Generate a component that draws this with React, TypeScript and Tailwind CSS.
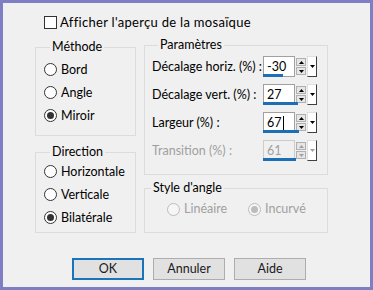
import React from 'react'

const font = { fontFamily: 'Lato, "Noto Sans", sans-serif' }

function Radio({ label, checked, disabled }: { label: string; checked?: boolean; disabled?: boolean }) {
  return (
    <div className="flex items-center h-[23px]">
      <span
        className={
          'w-[13px] h-[13px] rounded-full border flex items-center justify-center shrink-0 ' +
          (disabled ? 'border-[#bcbcbc] bg-[#f6f6f6]' : 'border-[#333333] bg-white')
        }
      >
        {checked && (
          <span className={'w-[7px] h-[7px] rounded-full ' + (disabled ? 'bg-[#bcbcbc]' : 'bg-[#333333]')} />
        )}
      </span>
      <span className={'ml-[4px] whitespace-nowrap ' + (disabled ? 'text-[#a0a0a0]' : 'text-black')}>{label}</span>
    </div>
  )
}

function Group({ title, className, children }: { title: string; className: string; children: React.ReactNode }) {
  return (
    <div className={'border border-[#dcdcdc] ' + className}>
      <div className="-mt-[9px] ml-[6px] px-[2px] w-fit bg-[#f0f0f0] leading-[16px] text-black whitespace-nowrap">{title}</div>
      {children}
    </div>
  )
}

function Spin({ value, bar, disabled, caret }: { value: string; bar: number; disabled?: boolean; caret?: boolean }) {
  const arrow = disabled ? '#a0a0a0' : '#000000'
  return (
    <div className="relative flex h-[21px]">
      <div
        className={
          'w-[32px] h-full border flex items-center pl-[3px] ' +
          (disabled ? 'border-[#cccccc] bg-[#f0f0f0] text-[#a0a0a0]' : 'border-[#a0a0a0] bg-white text-black')
        }
      >
        {value}
        {caret && <span className="w-px h-[14px] bg-black ml-[1px]" />}
      </div>
      <div className="w-[10px] h-full flex flex-col justify-center gap-[1px] ml-[1px]">
        <div className="h-[8px] bg-[#e6e6e6] border border-[#b0b0b0] flex items-center justify-center">
          <svg width="5" height="3" viewBox="0 0 5 3"><path d="M0 3 L2.5 0 L5 3 Z" fill={arrow} /></svg>
        </div>
        <div className="h-[8px] bg-[#e6e6e6] border border-[#b0b0b0] flex items-center justify-center">
          <svg width="5" height="3" viewBox="0 0 5 3"><path d="M0 0 L2.5 3 L5 0 Z" fill={arrow} /></svg>
        </div>
      </div>
      <div className="w-[10px] h-full ml-[1px] bg-white border border-[#e0e0e0] border-r-[#404040] border-b-[#404040] flex items-center justify-center">
        <svg width="5" height="3" viewBox="0 0 5 3"><path d="M0 0 L2.5 3 L5 0 Z" fill={arrow} /></svg>
      </div>
      <div className="absolute left-0 bottom-0 h-[3px] bg-[#1c6fb5]" style={{ width: bar }} />
    </div>
  )
}

function Row({ label, children, disabled }: { label: string; children: React.ReactNode; disabled?: boolean }) {
  return (
    <div className="flex items-center h-[21px]">
      <span className={'w-[111px] whitespace-nowrap ' + (disabled ? 'text-[#a0a0a0]' : 'text-black')}>{label}</span>
      {children}
    </div>
  )
}

function Btn({ label, primary }: { label: string; primary?: boolean }) {
  return (
    <div
      className={
        'w-[72px] h-[22px] flex items-center justify-center bg-[#e1e1e1] text-[#1a1a1a] ' +
        (primary ? 'border-2 border-[#1b73ba]' : 'border border-[#adadad]')
      }
    >
      {label}
    </div>
  )
}

export default function App() {
  return (
    <div
      className="w-[373px] h-[290px] border-[3px] border-[#7e7ec4] bg-[#f0f0f0] text-[12.5px] leading-[16px] overflow-hidden"
      style={font}
    >
      <div className="flex items-center mt-[12px] ml-[41px] h-[14px]">
        <span className="w-[13px] h-[13px] border border-[#333333] bg-white" />
        <span className="ml-[3px] text-black whitespace-nowrap text-[13px] tracking-[0.3px]">Afficher l'aperçu de la mosaïque</span>
      </div>

      <div className="flex items-start mt-[16px] ml-[32px]">
        <div className="flex flex-col w-[101px] mt-[2px]">
          <Group title="Méthode" className="h-[89px] pl-[8px]">
            <div className="mt-[3px]">
              <Radio label="Bord" />
              <Radio label="Angle" />
              <Radio label="Miroir" checked />
            </div>
          </Group>
          <Group title="Direction" className="h-[81px] mt-[16px] pl-[8px]">
            <div>
              <Radio label="Horizontale" />
              <Radio label="Verticale" />
              <Radio label="Bilatérale" checked />
            </div>
          </Group>
        </div>

        <div className="flex flex-col w-[184px] ml-[8px]">
          <Group title="Paramètres" className="h-[130px] pl-[7px]">
            <div className="flex flex-col gap-[7px] mt-[3px]">
              <Row label="Décalage horiz. (%) :">
                <Spin value="-30" bar={20} />
              </Row>
              <Row label="Décalage vert. (%) :">
                <Spin value="27" bar={35} />
              </Row>
              <Row label="Largeur (%) :">
                <Spin value="67" bar={36} caret />
              </Row>
              <Row label="Transition (%) :" disabled>
                <Spin value="61" bar={33} disabled />
              </Row>
            </div>
          </Group>
          <Group title="Style d'angle" className="h-[45px] mt-[13px]">
            <div className="flex mt-[3px] h-[20px] items-center">
              <div className="ml-[22px] w-[81px]">
                <Radio label="Linéaire" disabled />
              </div>
              <Radio label="Incurvé" checked disabled />
            </div>
          </Group>
        </div>
      </div>

      <div className="flex mt-[25px] ml-[69px] gap-[9px]">
        <Btn label="OK" primary />
        <Btn label="Annuler" />
        <Btn label="Aide" />
      </div>
    </div>
  )
}
